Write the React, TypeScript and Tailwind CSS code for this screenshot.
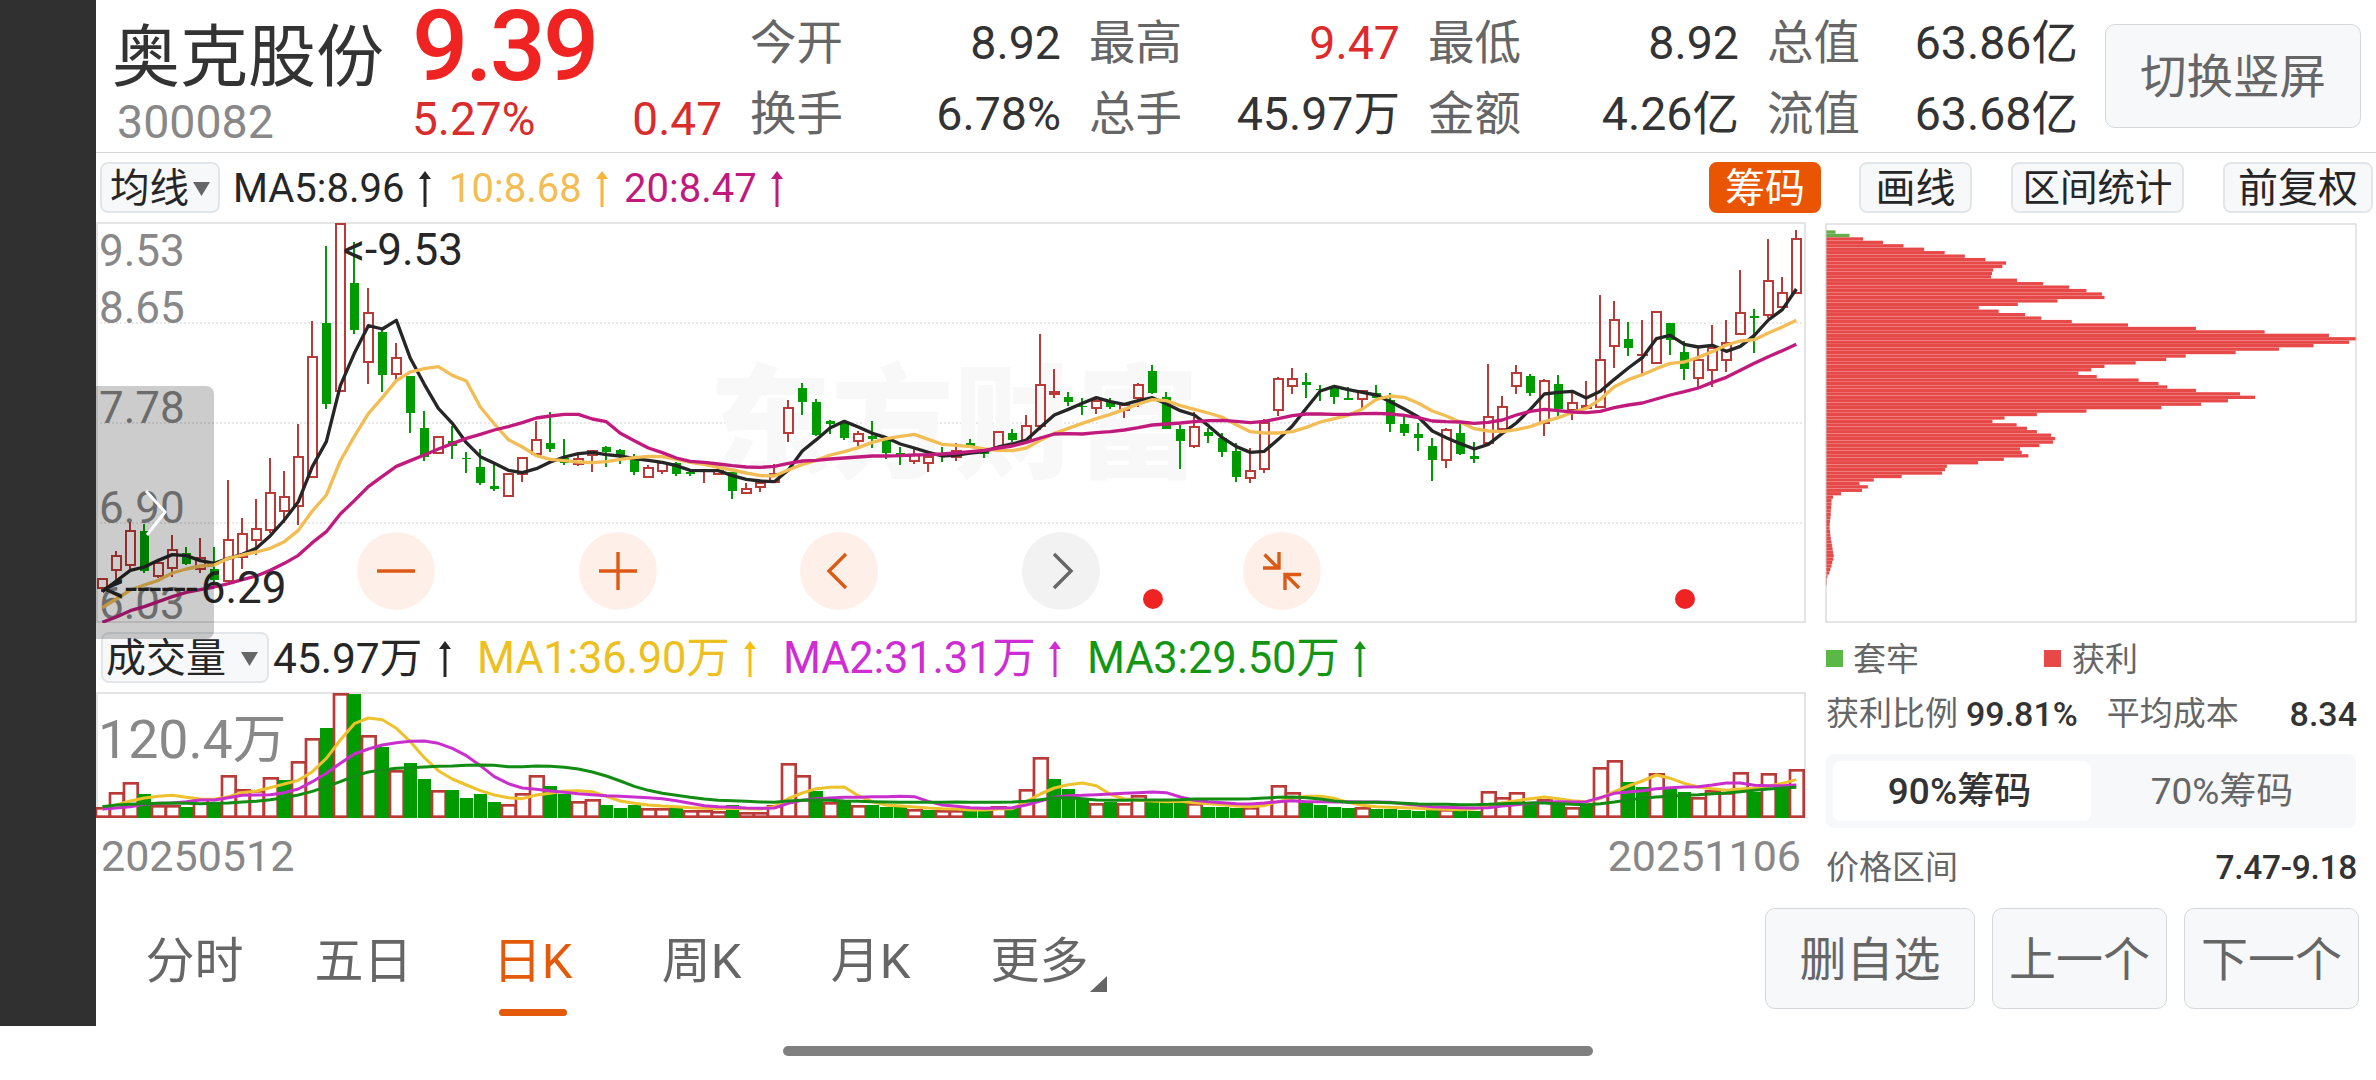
import { clsx } from "clsx";
import type { ReactNode } from "react";

// Chart geometry is stored in thirds of a pixel, see the viewBox of each svg.
const STEP = 42;
const FIRST = 19;

// Bars and candles sit on whole pixels so that their edges stay crisp
const snap = (v: number) => Math.round(v / 3) * 3;
const columnX = (i: number) => 18 + STEP * i;

type Dir = "r" | "g";
type Candle = [Dir, number, number, number, number];

// direction, high, body top, body bottom, low
const CANDLES: Candle[] = [
	["r", 1088, 1088, 1122, 1130], ["r", 1008, 1020, 1069, 1095], ["r", 920, 945, 1052, 1062],
	["g", 928, 948, 1068, 1074], ["r", 1040, 1040, 1086, 1090], ["r", 960, 1003, 1062, 1085],
	["g", 996, 1013, 1046, 1050], ["r", 969, 1027, 1066, 1074], ["g", 996, 1061, 1094, 1120],
	["r", 795, 972, 1100, 1100], ["r", 908, 955, 1029, 1063], ["r", 853, 940, 977, 1020],
	["r", 730, 832, 948, 955], ["r", 768, 842, 890, 923], ["r", 628, 722, 876, 930],
	["r", 318, 422, 790, 790], ["g", 93, 324, 568, 581], ["r", 24, 24, 530, 530],
	["g", 82, 205, 345, 358], ["r", 219, 291, 443, 506], ["g", 345, 352, 479, 530],
	["r", 384, 425, 480, 495], ["g", 483, 483, 595, 654], ["g", 589, 640, 725, 739],
	["r", 664, 664, 716, 716], ["g", 632, 678, 694, 731], ["g", 712, 729, 733, 773],
	["g", 703, 757, 804, 811], ["g", 748, 813, 822, 828], ["r", 773, 773, 846, 846],
	["r", 727, 727, 779, 800], ["r", 618, 672, 720, 720], ["g", 590, 685, 702, 711],
	["g", 672, 730, 744, 750], ["r", 720, 730, 750, 753], ["r", 706, 706, 724, 770],
	["g", 694, 696, 712, 756], ["g", 702, 706, 720, 746], ["g", 718, 730, 770, 780],
	["r", 750, 757, 788, 788], ["r", 738, 742, 771, 776], ["g", 740, 744, 776, 783],
	["g", 765, 770, 776, 783], ["r", 765, 765, 771, 804], ["r", 756, 765, 780, 780],
	["g", 770, 772, 828, 852], ["r", 805, 818, 836, 836], ["r", 800, 802, 818, 832],
	["r", 748, 775, 805, 805], ["r", 556, 575, 657, 681], ["g", 503, 520, 560, 599],
	["g", 552, 562, 660, 663], ["g", 615, 618, 626, 656], ["g", 618, 625, 668, 675],
	["r", 648, 654, 682, 694], ["g", 617, 663, 671, 698], ["g", 672, 676, 714, 733],
	["g", 697, 715, 720, 749], ["r", 700, 718, 740, 746], ["r", 716, 724, 748, 770],
	["g", 695, 715, 722, 740], ["r", 684, 705, 730, 738], ["g", 672, 684, 696, 700],
	["g", 700, 710, 718, 728], ["r", 648, 648, 698, 710], ["g", 643, 654, 675, 682],
	["r", 600, 630, 680, 680], ["r", 356, 507, 636, 645], ["r", 462, 527, 540, 550],
	["g", 531, 545, 560, 574], ["g", 549, 572, 577, 599], ["r", 552, 555, 582, 598],
	["g", 550, 562, 575, 583], ["r", 568, 568, 588, 608], ["r", 504, 507, 552, 575],
	["g", 449, 469, 534, 537], ["g", 531, 545, 642, 643], ["g", 630, 643, 678, 763],
	["r", 590, 633, 696, 700], ["g", 638, 652, 664, 684], ["g", 655, 670, 710, 725],
	["g", 685, 708, 787, 800], ["r", 700, 765, 792, 804], ["r", 612, 620, 765, 773],
	["r", 486, 488, 588, 602], ["r", 459, 490, 516, 536], ["g", 473, 501, 510, 548],
	["g", 511, 521, 526, 557], ["g", 516, 519, 547, 567], ["g", 516, 548, 554, 556],
	["r", 524, 526, 555, 580], ["g", 510, 535, 548, 550], ["g", 534, 556, 626, 650],
	["g", 600, 627, 654, 663], ["g", 624, 658, 670, 708], ["g", 668, 692, 735, 797],
	["r", 640, 642, 739, 759], ["g", 628, 654, 717, 720], ["g", 682, 723, 732, 743],
	["r", 446, 603, 688, 692], ["r", 542, 573, 645, 645], ["r", 449, 470, 516, 536],
	["g", 477, 483, 533, 543], ["r", 493, 494, 627, 663], ["g", 480, 507, 581, 602],
	["r", 530, 562, 588, 615], ["r", 498, 570, 582, 582], ["r", 240, 432, 578, 578],
	["r", 258, 312, 396, 459], ["g", 322, 371, 399, 423], ["r", 315, 416, 423, 480],
	["r", 288, 288, 448, 448], ["g", 324, 325, 375, 420], ["g", 378, 411, 461, 495],
	["r", 400, 433, 491, 516], ["r", 330, 395, 467, 516], ["r", 315, 381, 437, 471],
	["r", 165, 291, 361, 361], ["g", 281, 302, 308, 413], ["r", 72, 196, 303, 310],
	["r", 185, 231, 280, 280], ["r", 45, 69, 236, 236],
];

const MA5 = [
	1130, 1098, 1066, 1056, 1036, 1019, 1022, 1037, 1045, 1030, 1018, 1000, 962, 915, 860, 755, 680, 512, 415, 332,
	342, 316, 430, 508, 580, 625, 683, 725, 745, 766, 773, 761, 741, 726, 716, 712, 719, 723, 731, 736,
	742, 752, 766, 767, 767, 782, 793, 798, 800, 765, 708, 674, 638, 619, 636, 655, 668, 687, 699, 712,
	723, 720, 714, 710, 696, 687, 675, 637, 600, 583, 565, 548, 560, 568, 557, 548, 566, 587, 600, 632,
	668, 695, 712, 709, 673, 633, 580, 528, 514, 524, 532, 540, 560, 582, 606, 648, 668, 686, 702, 688,
	655, 624, 583, 537, 532, 529, 549, 529, 493, 459, 428, 371, 361, 388, 396, 391, 409, 394, 361, 315,
	284, 222,
];

const MA10 = [
	1178, 1152, 1125, 1110, 1096, 1074, 1062, 1053, 1050, 1030, 1020, 1011, 1000, 980, 946, 888, 840, 738, 664, 596,
	548, 497, 471, 461, 455, 481, 498, 576, 627, 674, 696, 722, 733, 737, 741, 743, 740, 733, 728, 724,
	725, 733, 742, 748, 757, 765, 774, 782, 783, 765, 748, 736, 720, 710, 698, 682, 671, 664, 658, 673,
	688, 691, 695, 702, 706, 707, 699, 676, 655, 640, 625, 611, 598, 583, 567, 554, 557, 572, 583, 594,
	607, 629, 650, 654, 654, 650, 637, 621, 611, 601, 582, 553, 543, 547, 565, 588, 603, 622, 641, 648,
	650, 644, 635, 620, 608, 592, 580, 553, 515, 494, 479, 461, 445, 441, 427, 410, 390, 378, 374, 354,
	336, 316,
];

const MA20 = [
	1222, 1206, 1187, 1175, 1160, 1145, 1132, 1124, 1116, 1106, 1094, 1083, 1066, 1045, 1021, 983, 950, 897, 857, 815,
	784, 754, 737, 720, 702, 686, 670, 658, 645, 635, 623, 609, 603, 598, 598, 612, 620, 655, 677, 699,
	713, 729, 739, 742, 747, 752, 756, 757, 754, 745, 738, 736, 732, 729, 726, 723, 723, 722, 720, 719,
	717, 714, 710, 706, 699, 693, 682, 669, 657, 656, 657, 653, 650, 645, 638, 630, 627, 624, 620, 617,
	616, 619, 623, 619, 611, 602, 597, 597, 598, 598, 596, 595, 597, 601, 608, 618, 620, 621, 625, 622,
	615, 600, 589, 583, 587, 591, 593, 589, 578, 570, 564, 552, 540, 530, 519, 502, 487, 466, 445, 425,
	407, 388,
];

const VOLUME_DIR =
	"rrrgrrgrgrrrrgrrgrgrgrggrggggrrrggrrgggrrgrrrgrrrrrgrgrgggrgrr" +
	"ggrgrrgggrgrrgggrgggrrrrggggrggggg" +
	"rggrrrgrgrgrrggrggrrrrgrgr";

const VOLUME = [
	547, 500, 470, 508, 540, 540, 545, 520, 532, 450, 493, 495, 456, 466, 409, 340, 310, 205, 208, 330,
	366, 435, 415, 462, 496, 494, 518, 508, 530, 537, 505, 451, 484, 508, 527, 522, 540, 548, 540, 550,
	550, 545, 555, 556, 558, 540, 560, 560, 540, 413, 451, 497, 532, 532, 541, 540, 545, 547, 553, 554,
	556, 556, 557, 557, 542, 550, 492, 397, 462, 492, 520, 535, 530, 535, 511, 532, 532, 530, 535, 546,
	546, 550, 545, 530, 479, 500, 534, 541, 546, 548, 547, 553, 553, 555, 558, 556, 553, 556, 557, 498,
	515, 502, 538, 523, 540, 546, 538, 427, 406, 470, 487, 443, 492, 500, 516, 495, 500, 441, 500, 443,
	490, 432,
];

const VMA1 = [
	552, 540, 528, 519, 514, 511, 517, 522, 523, 515, 503, 498, 488, 477, 466, 440, 400, 345, 296, 279,
	284, 310, 350, 398, 437, 462, 480, 497, 510, 518, 521, 510, 505, 498, 497, 500, 514, 528, 535, 540,
	543, 545, 548, 550, 551, 550, 551, 552, 545, 521, 504, 491, 487, 486, 512, 530, 540, 543, 546, 549,
	551, 552, 555, 555, 552, 551, 530, 507, 489, 479, 474, 482, 508, 522, 526, 528, 530, 529, 533, 536,
	539, 543, 545, 542, 530, 520, 514, 514, 520, 532, 541, 545, 547, 548, 550, 552, 553, 554, 552, 543,
	533, 527, 521, 516, 521, 527, 530, 520, 500, 483, 468, 450, 460, 475, 486, 491, 496, 492, 490, 483,
	475, 464,
];

const VMA2 = [
	552, 549, 545, 538, 535, 534, 530, 525, 525, 518, 511, 510, 509, 503, 492, 470, 445, 415, 387, 372,
	360, 353, 349, 348, 355, 370, 392, 422, 455, 476, 489, 493, 498, 502, 506, 509, 512, 514, 516, 518,
	521, 527, 535, 542, 545, 547, 549, 550, 549, 535, 526, 521, 519, 517, 517, 515, 515, 514, 515, 529,
	540, 544, 548, 550, 549, 548, 540, 528, 517, 512, 511, 509, 507, 505, 503, 501, 503, 516, 526, 530,
	533, 536, 537, 534, 530, 527, 530, 530, 531, 530, 531, 531, 532, 537, 541, 545, 547, 548, 549, 548,
	543, 539, 535, 532, 530, 531, 530, 518, 505, 501, 497, 491, 488, 486, 485, 480, 474, 474, 481, 482,
	482, 480,
];

const VMA3 = [
	545, 540, 538, 536, 535, 534, 535, 536, 535, 534, 531, 529, 524, 518, 510, 499, 485, 470, 453, 441,
	435, 430, 428, 426, 424, 423, 421, 420, 421, 425, 425, 423, 424, 427, 432, 441, 453, 468, 484, 496,
	505, 511, 517, 522, 526, 527, 529, 531, 532, 528, 526, 525, 526, 528, 529, 530, 531, 532, 532, 532,
	532, 531, 532, 532, 532, 531, 529, 524, 519, 518, 521, 525, 526, 526, 525, 525, 525, 524, 522, 522,
	522, 522, 521, 519, 517, 516, 518, 522, 528, 532, 532, 532, 533, 535, 537, 538, 538, 539, 539, 538,
	536, 535, 534, 534, 536, 538, 539, 536, 531, 525, 520, 516, 514, 511, 509, 506, 504, 500, 496, 492,
	489, 487,
];

// Chip distribution, one row per price level
const CHIPS = [
	97, 135, 172, 226, 282, 338, 394, 449, 505, 561, 551, 526, 523, 520, 591, 662, 733, 780, 822, 829,
	701, 593, 487, 541, 613, 657, 740, 893, 1078, 1265, 1440, 1514, 1495, 1398, 1304, 1186, 1050, 997, 914, 829,
	793, 758, 808, 922, 976, 1000, 1078, 1198, 1239, 1165, 1092, 984, 780, 645, 557, 524, 590, 618, 645, 684,
	695, 689, 652, 599, 604, 622, 555, 485, 400, 395, 387, 277, 201, 162, 185, 169, 112, 90, 86, 86,
	85, 84, 84, 83, 82, 81, 81, 82, 83, 84, 86, 87, 89, 90, 92, 91, 88, 86, 83, 80,
	75, 73, 73,
];

const toPoints = (ys: number[]) =>
	ys.map((y, i) => `${FIRST + STEP * i},${y}`).join(" ");

function Line({ ys, color, width = 10 }: { ys: number[]; color: string; width?: number }) {
	return (
		<polyline
			points={toPoints(ys)}
			fill="none"
			stroke={color}
			strokeWidth={width}
			strokeLinejoin="round"
		/>
	);
}

function CandleShape({ candle, index }: { candle: Candle; index: number }) {
	const dir = candle[0];
	const high = snap(candle[1]);
	const top = snap(candle[2]);
	const bottom = snap(candle[3]);
	const low = snap(candle[4]);
	const x = columnX(index);

	if (dir === "g") {
		return (
			<g fill="#009b00">
				<rect x={x - 3} y={high} width={6} height={low - high} />
				<rect x={x - 12} y={top} width={27} height={bottom - top} />
			</g>
		);
	}
	return (
		<g fill="#b93a37">
			<rect x={x - 3} y={high} width={6} height={top - high} />
			<rect x={x - 3} y={bottom} width={6} height={low - bottom} />
			{bottom - top > 13 ? (
				<rect
					x={x - 12}
					y={top + 3}
					width={27}
					height={bottom - top - 6}
					fill="none"
					stroke="#b93a37"
					strokeWidth={6}
				/>
			) : (
				<rect x={x - 15} y={top} width={33} height={bottom - top} />
			)}
		</g>
	);
}

function KLineChart() {
	const labels: [string, number][] = [
		["9.53", 153],
		["8.65", 324],
		["7.78", 624],
		["6.90", 924],
		["6.03", 1212],
	];

	return (
		<svg className="block w-[1710px] h-[401px]" viewBox="0 21 5130 1203">
			<rect x={3} y={24} width={5124} height={1197} fill="none" stroke="#e4e4e4" strokeWidth={6} />
			{[324, 624, 924].map((y) => (
				<line key={y} x1={0} x2={5124} y1={y} y2={y} stroke="#e2e2e2" strokeWidth={4} strokeDasharray="6 6" />
			))}

			{/* Watermark */}
			<text x={1838} y={760} fontSize={368} fontWeight={900} fill="#f8f8f8">
				东方财富
			</text>

			<g fill="#888888" fontSize={132}>
				{labels.map(([text, y]) => (
					<text key={text} x={9} y={y}>
						{text}
					</text>
				))}
			</g>

			{CANDLES.map((candle, i) => (
				<CandleShape key={i} candle={candle} index={i} />
			))}
			<Line ys={MA5} color="#262626" />
			<Line ys={MA10} color="#f2bd55" />
			<Line ys={MA20} color="#c01a7c" />

			<g fill="#262626" fontSize={132}>
				<text x={740} y={149}>
					{"<-9.53"}
				</text>
				<text x={20} y={1165}>
					{"<------"}
					<tspan x={314}>6.29</tspan>
				</text>
			</g>

			<circle cx={3171} cy={1152} r={30} fill="#f02323" />
			<circle cx={4767} cy={1152} r={30} fill="#f02323" />
		</svg>
	);
}

function VolumeChart() {
	return (
		<svg className="block w-[1710px] h-[126px]" viewBox="0 201 5130 378">
			<rect x={3} y={204} width={5124} height={372} fill="none" stroke="#e4e4e4" strokeWidth={6} />
			<text x={6} y={399} fontSize={161} fill="#888888">
				120.4万
			</text>
			{VOLUME.map((v, i) => {
				const x = columnX(i);
				const top = snap(v);
				return VOLUME_DIR[i] === "g" ? (
					<rect key={i} x={x - 18} y={top} width={39} height={579 - top} fill="#009b00" />
				) : (
					<rect
						key={i}
						x={x - 18}
						y={top + 4}
						width={41}
						height={571 - top}
						fill="#ffffff"
						stroke="#b93a37"
						strokeWidth={8}
					/>
				);
			})}
			<Line ys={VMA1} color="#edc22c" width={9} />
			<Line ys={VMA2} color="#c92fcd" width={9} />
			<Line ys={VMA3} color="#128c12" width={9} />
		</svg>
	);
}

function ChipChart() {
	return (
		<svg className="block w-[532px] h-[401px]" viewBox="0 0 532 401">
			{CHIPS.map((right, i) => (
				<rect
					key={i}
					x={1}
					y={8.4 + i * 3.443}
					width={(right - 71) / 2.722}
					height={3.3}
					fill={i < 2 ? "#62ad4a" : "#e74848"}
				/>
			))}
			<rect x={1} y={2} width={530} height={398} fill="none" stroke="#cccccc" />
		</svg>
	);
}

function ArrowUp({ className }: { className?: string }) {
	return (
		<svg className={clsx("shrink-0 w-3 h-9", className)} viewBox="0 0 12 36">
			<path d="M6 0 L12 8 H7.5 V36 H4.5 V8 H0 Z" fill="currentColor" />
		</svg>
	);
}

function ArrowDown({ className }: { className?: string }) {
	return (
		<svg className={clsx("shrink-0 w-[17px] h-[14px]", className)} viewBox="0 0 17 14">
			<path d="M0 0 H17 L8.5 14 Z" fill="#666666" />
		</svg>
	);
}

function Stat({ label, value, red }: { label: string; value: string; red?: boolean }) {
	return (
		<div className="flex justify-between h-[71px] leading-[71px] text-[46.5px]">
			<span className="text-[#666666]">{label}</span>
			<span className={red ? "text-[#dd2a2a]" : "text-[#333333]"}>{value}</span>
		</div>
	);
}

function Header() {
	return (
		<header className="flex h-[153px] border-b border-[#d6d6d6]">
			<div className="w-[316px] pl-4 pt-[18px]">
				<p className="text-[68px] leading-[80px] text-[#333333]">奥克股份</p>
				<p className="pl-[5px] text-[46.5px] leading-[49px] text-[#888888]">300082</p>
			</div>
			<div className="w-[310px] mr-7 pt-[2px]">
				<p className="text-[99px] leading-[88px] tracking-[-3px] font-medium text-[#f02323]">9.39</p>
				<div className="mt-[4px] flex justify-between text-[46px] leading-[50px] text-[#d92c2c]">
					<span>5.27%</span>
					<span>0.47</span>
				</div>
			</div>
			<div className="grid grid-cols-[repeat(4,311px)] gap-x-7 content-start pt-2">
				<Stat label="今开" value="8.92" />
				<Stat label="最高" value="9.47" red />
				<Stat label="最低" value="8.92" />
				<Stat label="总值" value="63.86亿" />
				<Stat label="换手" value="6.78%" />
				<Stat label="总手" value="45.97万" />
				<Stat label="金额" value="4.26亿" />
				<Stat label="流值" value="63.68亿" />
			</div>
			<button className="ml-[27px] mt-6 w-[256px] h-[104px] pt-1 rounded-[10px] border border-[#d5d8db] bg-[#f7f8fa] text-[46.5px] text-[#666666]">
				切换竖屏
			</button>
		</header>
	);
}

function ToolButton({ children, className }: { children: ReactNode; className: string }) {
	return (
		<button
			className={clsx(
				"flex items-center justify-center h-[51px] pt-[2px] rounded-lg border-2 leading-none whitespace-nowrap",
				className,
			)}
		>
			{children}
		</button>
	);
}

function Toolbar() {
	return (
		<div className="flex items-center h-[69px] pl-1 text-[40px]">
			<ToolButton className="w-[120px] gap-1 border-[#e3e6e9] bg-[#f7f8fa] text-[#262626] text-[39.5px]">
				均线
				<ArrowDown />
			</ToolButton>
			<div className="flex items-center w-[200px] pt-[2px] ml-[13px] text-[#262626]">
				<span className="w-[186px]">MA5:8.96</span>
				<ArrowUp />
			</div>
			<div className="flex items-center w-[175px] pt-[2px] ml-4 text-[#f2bd55]">
				<span className="w-[147px]">10:8.68</span>
				<ArrowUp className="text-[#fab437]" />
			</div>
			<div className="flex items-center pt-[2px] text-[#c01a7c]">
				<span className="w-[147px]">20:8.47</span>
				<ArrowUp />
			</div>
			<ToolButton className="ml-auto mr-[38px] w-[112px] border-[#ea5504] bg-[#ea5504] text-white">筹码</ToolButton>
			<ToolButton className="mr-[39px] w-[113px] border-[#e3e6e9] bg-[#f7f8fa] text-[#262626]">画线</ToolButton>
			<ToolButton className="mr-[39px] w-[173px] border-[#e3e6e9] bg-[#f7f8fa] text-[#262626] text-[37.5px]">
				区间统计
			</ToolButton>
			<ToolButton className="mr-[3px] w-[150px] border-[#e3e6e9] bg-[#f7f8fa] text-[#262626]">前复权</ToolButton>
		</div>
	);
}

function RoundButton({ children, muted }: { children: ReactNode; muted?: boolean }) {
	return (
		<button
			className={clsx(
				"flex items-center justify-center size-[78px] rounded-full",
				muted ? "bg-[#f2f2f2] text-[#666666]" : "bg-[#fef0e9] text-[#dd5a16]",
			)}
		>
			<svg className="size-[42px]" viewBox="0 0 42 42" fill="none" stroke="currentColor" strokeWidth={3.4}>
				{children}
			</svg>
		</button>
	);
}

function ChartControls() {
	return (
		<div className="absolute left-[261px] top-[310px] flex gap-[143.5px]">
			<RoundButton>
				<path d="M2 21 H40" />
			</RoundButton>
			<RoundButton>
				<path d="M2 21 H40 M21 2 V40" />
			</RoundButton>
			<RoundButton>
				<path d="M28 4 L11 21 L28 38" />
			</RoundButton>
			<RoundButton muted>
				<path d="M14 4 L31 21 L14 38" />
			</RoundButton>
			<RoundButton>
				<path d="M3.500 4.500 L17.500 18.500 M2 18 H18 V2 M38 38 L24 24 M40 24.500 H24 V40" />
			</RoundButton>
		</div>
	);
}

function VolumeBar() {
	return (
		<div className="flex items-center h-[69px] pl-[5px] text-[43.5px]">
			<ToolButton className="w-[168px] justify-start! pl-[3px] gap-[15px] border-[#e3e6e9] bg-[#f7f8fa] text-[#262626] text-[40px]">
				成交量
				<ArrowDown />
			</ToolButton>
			<div className="flex items-center w-[204px] pt-[2px] ml-1 text-[#262626] text-[42.5px]">
				<span className="w-[166px]">45.97万</span>
				<ArrowUp />
			</div>
			<div className="flex items-center w-[306px] pt-[2px] text-[#edc022] tracking-[-0.2px]">
				<span className="w-[267px]">MA1:36.90万</span>
				<ArrowUp className="text-[#fabe0a]" />
			</div>
			<div className="flex items-center w-[304px] pt-[2px] text-[#cd2dd2] tracking-[-0.2px]">
				<span className="w-[266px]">MA2:31.31万</span>
				<ArrowUp />
			</div>
			<div className="flex items-center pt-[2px] text-[#149614] tracking-[-0.2px]">
				<span className="w-[267px]">MA3:29.50万</span>
				<ArrowUp />
			</div>
		</div>
	);
}

function ChipPanel() {
	return (
		<aside className="w-[532px] ml-[19px] text-[33px] text-[#666666]">
			<ChipChart />
			<div className="flex items-center h-[70px] pl-px">
				<span className="size-[17px] bg-[#5ab946]" />
				<span className="ml-[10px] pt-[3px] w-[191px]">套牢</span>
				<span className="size-[17px] bg-[#e74848]" />
				<span className="ml-[11px] pt-[3px]">获利</span>
			</div>
			<div className="flex items-center h-10 pt-[2px] pl-px">
				<span>获利比例</span>
				<span className="ml-2 text-[34px] font-medium text-[#333333]">99.81%</span>
				<span className="ml-[29px]">平均成本</span>
				<span className="ml-auto text-[34px] font-medium text-[#333333]">8.34</span>
			</div>
			<div className="flex items-center mt-[21px] ml-px w-[530px] h-[74px] p-[7px] rounded-lg bg-[#f7f8fa] text-[37px]">
				<div className="flex items-center justify-center w-[258px] h-full pt-[2px] pr-[5px] rounded-lg bg-white font-medium text-[#333333]">
					90%筹码
				</div>
				<div className="flex-1 pt-[2px] pl-1 text-center">70%筹码</div>
			</div>
			<div className="flex items-center justify-between h-[65px] pt-[15px] pl-px">
				<span>价格区间</span>
				<span className="text-[33.5px] font-medium tracking-[-0.3px] text-[#333333]">7.47-9.18</span>
			</div>
		</aside>
	);
}

function Tab({ label, active }: { label: string; active?: boolean }) {
	return (
		<div className={clsx("flex flex-col items-center w-[169px] pt-[43px]", active ? "text-[#e25a0a]" : "text-[#666666]")}>
			<span className="text-[49px] leading-[52px]">{label}</span>
			{active && <span className="mt-[21px] w-[68px] h-[7px] rounded-full bg-[#e25a0a]" />}
		</div>
	);
}

function BottomNav() {
	const button = "h-[101px] pt-1 rounded-[10px] border border-[#d5d8db] bg-[#f7f8fa] text-[47px] text-[#666666]";

	return (
		<nav className="flex h-[133px] pl-[14px] pr-[17px]">
			<Tab label="分时" />
			<Tab label="五日" />
			<Tab label="日K" active />
			<Tab label="周K" />
			<Tab label="月K" />
			<Tab label="更多" />
			<svg className="-ml-[34px] mt-[83px] w-[17px] h-4" viewBox="0 0 17 16">
				<path d="M17 0 V16 H0 Z" fill="#666666" />
			</svg>
			<div className="flex gap-[17px] ml-auto mt-[15px]">
				<button className={clsx("w-[210px]", button)}>删自选</button>
				<button className={clsx("w-[175px]", button)}>上一个</button>
				<button className={clsx("w-[175px]", button)}>下一个</button>
			</div>
		</nav>
	);
}

export default function App() {
	return (
		<div className="relative w-[2376px] h-[1080px] overflow-hidden bg-white font-['Roboto','Noto_Sans_CJK_SC',sans-serif]">
			<div className="flex h-[1026px]">
				<div className="w-24 shrink-0 bg-[#303030]" />
				<main className="w-[2280px]">
					<Header />
					<Toolbar />
					<div className="flex">
						<section className="relative w-[1710px]">
							<KLineChart />
							<ChartControls />
							<VolumeBar />
							<VolumeChart />
							<div className="flex justify-between h-[75px] px-[5px] text-[43px] leading-[76px] text-[#888888]">
								<span>20250512</span>
								<span>20251106</span>
							</div>

							{/* Side drawer handle */}
							<div className="absolute left-0 top-[164px] w-[118px] h-[253px] rounded-r-lg bg-black/20">
								<svg className="w-full h-full" viewBox="0 0 118 253">
									<path d="M50 105 L69 126 L51 149" fill="none" stroke="#ffffff" strokeWidth={3} />
								</svg>
							</div>
						</section>
						<ChipPanel />
					</div>
					<BottomNav />
				</main>
			</div>

			{/* Home indicator */}
			<div className="absolute left-[783px] top-[1046px] w-[810px] h-[10px] rounded-full bg-[#808080]" />
		</div>
	);
}
